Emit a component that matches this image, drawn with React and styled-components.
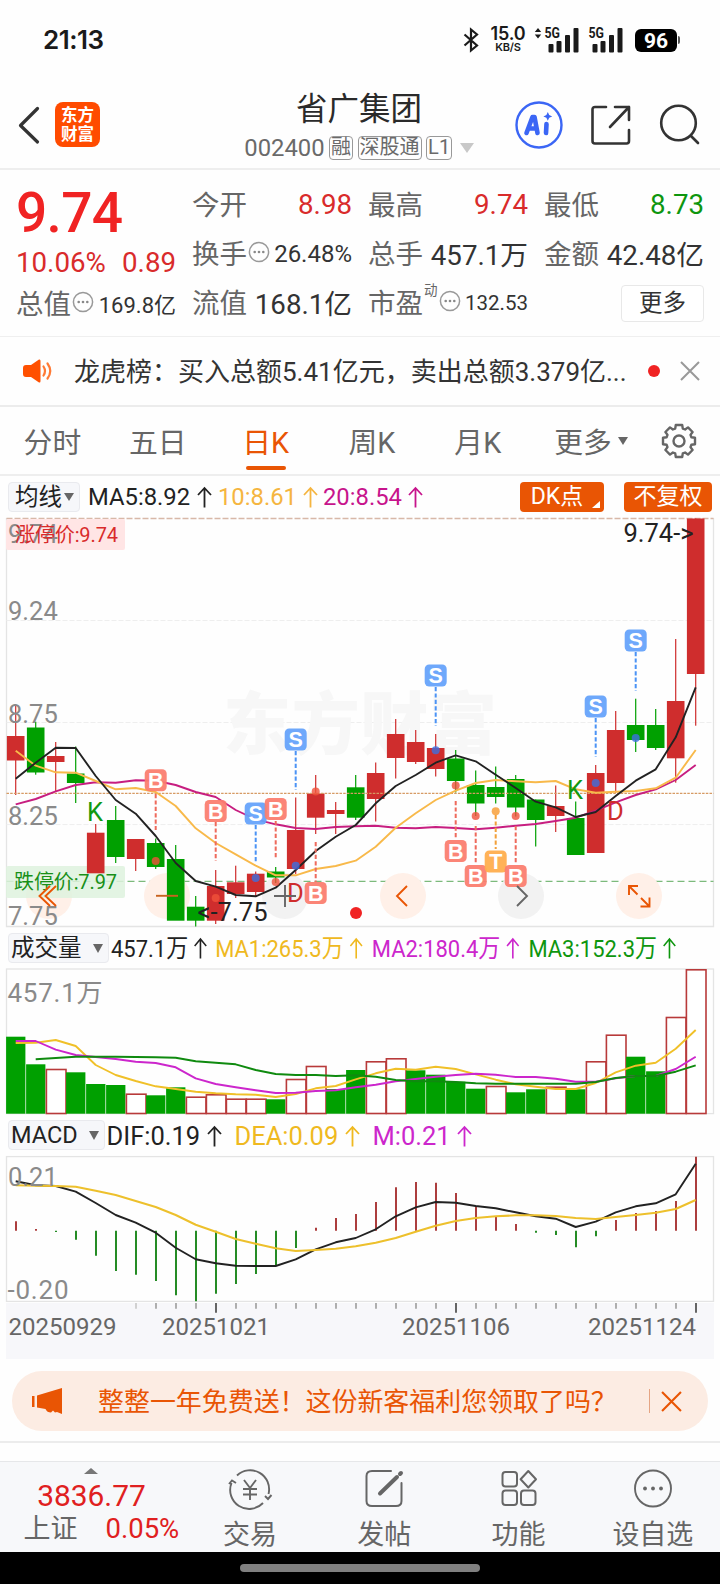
import React from "react";
import styled, { createGlobalStyle } from "styled-components";

const RED = "#d92b2b";
const UP = "#cf2d2d";
const DOWN = "#00a000";
const ORANGE = "#e95504";

const Global = createGlobalStyle`
  body { margin: 0; background: #fff; }
  * { box-sizing: border-box; }
`;

const Screen = styled.div`
  width: 720px;
  height: 1584px;
  overflow: hidden;
  display: flex;
  flex-direction: column;
  background: #fefefe;
  color: #333;
  font-family: Roboto, "Noto Sans CJK SC", sans-serif;
  font-weight: 400;
  svg { display: block; flex: none; overflow: visible; }
`;

/* ---------- status bar ---------- */
const StatusBar = styled.div`
  height: 80px;
  padding: 0 40px 0 43px;
  display: flex;
  align-items: center;
  justify-content: space-between;
  color: #1a1a1a;
`;
const Clock = styled.div`
  font: 600 26px/32px Inter, sans-serif;
  letter-spacing: -0.5px;
`;
const StatusIcons = styled.div`
  display: flex;
  align-items: center;
`;
const Speed = styled.div`
  width: 38px;
  margin: 0 7px 0 10px;
  display: flex;
  flex-direction: column;
  align-items: center;
  font: 600 18px/14px Inter, sans-serif;
  letter-spacing: -0.2px;
  small { margin-top: 1px; font-size: 11px; line-height: 11px; }
`;
const Battery = styled.div`
  width: 42px;
  height: 23px;
  margin: 0 1px 0 11px;
  border-radius: 6px;
  background: #000;
  color: #fff;
  text-align: center;
  font: 700 21px/24px Roboto, sans-serif;
`;
const BatteryTip = styled.div`
  width: 2px;
  height: 8px;
  background: #555;
  border-radius: 0 2px 2px 0;
`;

/* ---------- header ---------- */
const Header = styled.header`
  height: 90px;
  border-bottom: 2px solid #eee;
  display: flex;
  align-items: center;
  padding: 1px 20px 0 18px;
  justify-content: space-between;
`;
const HeaderSide = styled.div`
  width: 190px;
  display: flex;
  align-items: center;
  gap: ${(p) => p.$gap}px;
  justify-content: ${(p) => (p.$end ? "flex-end" : "flex-start")};
`;
const Logo = styled.div`
  width: 45px;
  height: 45px;
  border-radius: 8px;
  background: #ff4b00;
  color: #fff;
  font: 700 16.5px/19px "Noto Sans CJK SC", sans-serif;
  text-align: center;
  padding-top: 3px;
`;
const TitleBlock = styled.div`
  display: flex;
  flex-direction: column;
  align-items: center;
  padding-top: 6px;
`;
const Title = styled.div`
  font-size: 31.5px;
  line-height: 41px;
  color: #2a2a2a;
`;
const Code = styled.div`
  display: flex;
  align-items: center;
  height: 36px;
  gap: 4.5px;
  font-size: 23.8px;
  color: #6a6a6a;
`;
const Tag = styled.span`
  height: 24px;
  padding: 0 1px;
  border: 1px solid #999;
  border-radius: 4px;
  font-size: 20px;
  line-height: 21px;
`;
const Caret = styled.i`
  width: 0;
  height: 0;
  margin-left: ${(p) => p.$ml || 0}px;
  border: ${(p) => p.$w / 2}px solid transparent;
  border-bottom-width: 0;
  border-top: ${(p) => p.$h}px solid ${(p) => p.$c || "#666"};
`;

/* ---------- quote ---------- */
const Quote = styled.section`
  height: 167px;
  border-bottom: 1px solid #efefef;
  padding: 8px 16px 0;
  display: grid;
  grid-template-columns: repeat(4, 160px);
  column-gap: 16px;
`;
const QuoteColumn = styled.div`
  display: flex;
  flex-direction: column;
  padding-top: 2px;
`;
const Price = styled.div`
  font-size: 55px;
  letter-spacing: -0.7px;
  font-weight: 500;
  line-height: 66px;
  color: #f02323;
`;
const Change = styled.div`
  height: 33px;
  display: flex;
  align-items: center;
  justify-content: space-between;
  font-size: 27.7px;
  color: ${RED};
`;
const Cell = styled.div`
  height: 49px;
  display: flex;
  align-items: center;
  white-space: nowrap;
`;
const Label = styled.span`
  font-size: 27.5px;
  margin-bottom: 4px;
  color: #666;
`;
const Value = styled.span`
  margin-left: auto;
  margin-bottom: ${(p) => (p.$unit ? 2 : 0)}px;
  font-size: ${(p) => p.$size || 27.7}px;
  color: ${(p) => p.$c || "#333"};
`;
const Sup = styled.sup`
  font-size: 13.5px;
  line-height: 14px;
  align-self: flex-start;
  margin: 5px 0 0 1px;
  color: #666;
  vertical-align: baseline;
`;
const MoreButton = styled.button`
  margin: 1px 0 0 auto;
  width: 83px;
  height: 37px;
  padding: 0;
  border: 1px solid #e8e8e8;
  border-radius: 4px;
  background: #fff;
  color: #333;
  font: 400 23.5px/35px Roboto, "Noto Sans CJK SC", sans-serif;
`;

/* ---------- notice ---------- */
const Notice = styled.section`
  height: 70px;
  border-bottom: 2px solid #ececec;
  display: flex;
  align-items: center;
  padding: 0 19px 0 22px;
`;
const NoticeText = styled.div`
  width: 561px;
  margin: 0 0 4px 21px;
  font-size: 26px;
  white-space: nowrap;
`;
const RedDot = styled.i`
  width: 12px;
  height: 12px;
  border-radius: 50%;
  background: #f02323;
  margin: 0 20px 0 13px;
`;

/* ---------- tabs ---------- */
const Tabs = styled.nav`
  height: 69px;
  border-bottom: 2px solid #eee;
  display: flex;
  align-items: center;
  padding: 0 23px 0 0;
`;
const Tab = styled.div`
  width: ${(p) => p.$w}px;
  height: 67px;
  display: flex;
  justify-content: center;
  align-items: center;
  position: relative;
  font-size: 28.8px;
  color: ${(p) => (p.$on ? ORANGE : "#666")};
  &::after {
    content: "";
    display: ${(p) => (p.$on ? "block" : "none")};
    position: absolute;
    bottom: 4px;
    width: 40px;
    height: 4px;
    border-radius: 2px;
    background: ${ORANGE};
  }
`;

/* ---------- indicator rows ---------- */
const IndicatorRow = styled.div`
  height: ${(p) => p.$h}px;
  padding: ${(p) => p.$pt}px 8px 0 8px;
  display: flex;
  align-items: flex-start;
`;
const Picker = styled.button`
  width: ${(p) => p.$w}px;
  height: 30px;
  flex: none;
  padding: 0 5px 0 ${(p) => p.$pl}px;
  border: 1px solid #e9eaee;
  border-radius: 4px;
  background: #f6f7fa;
  display: flex;
  align-items: center;
  justify-content: space-between;
  color: #222;
  font: 400 23.5px/28px Roboto, "Noto Sans CJK SC", sans-serif;
`;
const Readouts = styled.div`
  display: flex;
  height: 30px;
  align-items: center;
  margin: ${(p) => p.$mt || 0}px 0 0 ${(p) => p.$ml}px;
  font-size: ${(p) => p.$size}px;
  white-space: nowrap;
  transform: scaleX(${(p) => p.$sx || 1});
  transform-origin: left;
`;
const Readout = styled.span`
  display: flex;
  align-items: center;
  width: ${(p) => p.$w}px;
  color: ${(p) => p.$c};
  svg { margin-left: 6.5px; margin-top: ${(p) => p.$at || 0}px; }
`;
const Chip = styled.button`
  width: ${(p) => p.$w}px;
  height: 30px;
  margin: 0 0 0 ${(p) => p.$ml}px;
  padding: 0 ${(p) => p.$pr || 0}px 0 0;
  border: 0;
  border-radius: 4px;
  background: ${ORANGE};
  color: #fff;
  position: relative;
  font: 400 23px/30px Roboto, "Noto Sans CJK SC", sans-serif;
  white-space: nowrap;
`;
const Corner = styled.i`
  position: absolute;
  right: 4px;
  bottom: 4px;
  border-left: 8px solid transparent;
  border-bottom: 7px solid #fff;
`;
const AxisBand = styled.div`
  height: 57px;
`;

/* ---------- banner ---------- */
const BannerArea = styled.div`
  height: 101px;
  padding: 11px 12px 0;
`;
const Banner = styled.div`
  height: 60px;
  border-radius: 30px;
  background: #fcece3;
  color: ${ORANGE};
  display: flex;
  align-items: center;
  padding: 0 26px 0 19px;
`;
const BannerText = styled.div`
  width: 552px;
  margin: 0 0 4px 35px;
  font-size: 25.95px;
  white-space: nowrap;
`;
const Separator = styled.i`
  width: 1px;
  height: 24px;
  background: #e5a584;
  margin-right: 11px;
`;
const Divider = styled.div`
  height: 2px;
  margin: 10px -12px 0;
  background: #ececec;
`;

/* ---------- bottom nav ---------- */
const BottomNav = styled.nav`
  height: 91px;
  border-top: 1px solid #e6e7e9;
  background: #f7f8fa;
  display: flex;
`;
const IndexBox = styled.div`
  width: 183px;
  display: flex;
  flex-direction: column;
  align-items: center;
  padding-top: 6px;
  svg { margin-bottom: 5px; }
`;
const IndexValue = styled.div`
  font-size: 29.9px;
  line-height: 34px;
  color: #e02020;
`;
const IndexRow = styled.div`
  display: flex;
  align-items: center;
  align-self: flex-start;
  gap: 28px;
  margin-left: 23.5px;
  height: 31px;
  font-size: 27px;
  line-height: 32px;
  color: #666;
  white-space: nowrap;
  b { font-weight: 400; font-size: 27.5px; color: #e02020; }
`;
const NavItem = styled.div`
  width: 134.3px;
  display: flex;
  flex-direction: column;
  align-items: center;
  padding-top: 4px;
  font-size: 27px;
  line-height: 34px;
  color: #666;
  white-space: nowrap;
  svg { margin-bottom: 6px; }
`;
const GestureArea = styled.div`
  height: 32px;
  background: #000;
  display: flex;
  align-items: center;
  justify-content: center;
  padding-bottom: 3px;
`;
const GesturePill = styled.div`
  width: 240px;
  height: 8px;
  margin-top: 2px;
  border-radius: 4px;
  background: #808080;
`;

/* ---------- icons ---------- */
const Signal = ({ arrows }) => (
  <svg width={arrows ? 54 : 36} height="26" viewBox={arrows ? "0 0 54 26" : "10 0 36 26"}>
    {arrows && <path d="M4 1l3.2 4H.8zM4 11.5L.8 7.5h6.4z" fill="#1a1a1a" />}
    <text x="10.5" y="11" fontSize="14" fontWeight="700" fontFamily="Roboto" textLength="15.5" lengthAdjust="spacingAndGlyphs" fill="#1a1a1a">5G</text>
    {[[14.5, 17], [22.5, 14], [31, 8], [39.5, 1]].map(([x, y]) => (
      <rect key={x} x={x} y={y} width="5" height={25.5 - y} rx="1" fill="#1a1a1a" />
    ))}
  </svg>
);

const Arrow = () => (
  <svg width="15" height="22" viewBox="0 0 15 22" fill="none" stroke="currentColor" strokeWidth="1.8">
    <path d="M7.5 21.5V2M1 9l6.5-7L14 9" />
  </svg>
);

const InfoIcon = styled.svg`
  width: 22px;
  height: 22px;
  margin: 0 0 3px 1px;
`;
const InfoDot = () => (
  <InfoIcon viewBox="0 0 22 22">
    <circle cx="11" cy="11" r="9.6" fill="none" stroke="#999" strokeWidth="1.5" />
    {[6.7, 11, 15.3].map((x) => <circle key={x} cx={x} cy="11" r="1.3" fill="#888" />)}
  </InfoIcon>
);

const Cross = ({ size, width, color }) => (
  <svg width={size} height={size} viewBox="0 0 20 20" stroke={color} strokeWidth={width}>
    <path d="M1 1l18 18M19 1L1 19" />
  </svg>
);

const gearPath = (() => {
  const pts = [];
  for (let i = 0; i < 8; i++) {
    const a = (i * Math.PI) / 4 - Math.PI / 2;
    [[-0.2, 16.3], [0.2, 16.3], [0.3, 13], [Math.PI / 4 - 0.3, 13]].forEach(([d, r]) =>
      pts.push(`${(18 + r * Math.cos(a + d)).toFixed(1)} ${(18 + r * Math.sin(a + d)).toFixed(1)}`)
    );
  }
  return `M${pts.join("L")}Z`;
})();
const GearIcon = styled.svg`
  width: 36px;
  height: 36px;
  margin-left: 11px;
`;

/* ---------- chart data ---------- */
const cx = (i) => 15.7 + 20 * i;

// [direction, body top, body bottom, wick top, wick bottom]
const candles = [
  [1, 736, 760.5, 705, 795], [0, 727.5, 772.5, 721.7, 774.7], [1, 756, 762, 742, 791], [0, 773.5, 783, 746.5, 803],
  [1, 832.7, 873.3, 824, 873], [0, 820, 857, 806, 863], [1, 839, 859, 839, 871], [0, 843, 867, 838.5, 869],
  [0, 859, 920.7, 845, 920], [0, 906.7, 920.7, 896, 926.5], [1, 886, 920.7, 870, 924], [1, 882.3, 894, 865.7, 898],
  [1, 873.7, 892, 871.5, 896], [0, 871.5, 877.5, 867, 883], [1, 830, 869, 797.5, 874], [1, 793.5, 817.7, 775, 834],
  [1, 810, 814, 802, 834], [0, 787.3, 817.7, 775, 820], [1, 773, 799, 762.5, 821.5], [1, 734, 758, 719, 778.5],
  [1, 742, 762, 730, 764], [1, 748, 769, 734, 776.5], [0, 758.5, 781, 750, 792.5], [0, 785, 803.5, 770.5, 816],
  [0, 787, 797, 766.5, 803.5], [0, 779, 807.5, 775, 816.5], [0, 799.5, 820, 799.5, 846.5], [1, 806, 816, 785.5, 832],
  [0, 818, 855, 801.5, 855], [1, 773, 853, 765, 853], [1, 730, 783, 711, 793], [0, 725, 740, 698.7, 752],
  [0, 725, 748, 709, 750], [1, 701, 758.3, 639, 782.7], [1, 518.5, 674, 518.5, 725.7],
];
const ma5 = [778.7, 762.7, 747.7, 748, 776, 800, 813.7, 836, 863, 881, 886.7, 895, 896.3, 887.7, 870, 851, 836.7, 825, 803.3, 786, 775, 762.7, 755.3, 761.3, 774.7, 788, 801.7, 807.3, 817, 812, 796, 780.7, 769.3, 737.3, 687.3];
const ma10 = [750.7, 765.7, 772.3, 772.7, 781, 789.3, 788, 792, 806, 828.3, 843, 854.3, 865.7, 875.3, 875.3, 869, 866, 860.7, 846.7, 827.7, 813.3, 800, 790.7, 783, 780, 781.3, 782.3, 781, 789.3, 792.7, 791.7, 791, 788.3, 777.7, 750];
const ma20 = [804.3, 799, 791.3, 785, 782.3, 782.7, 780.3, 780.7, 785, 792, 797, 810, 819.3, 824.3, 828, 829, 827, 826.3, 825.7, 827.7, 828.3, 827, 828, 829.3, 827.7, 825.7, 824, 821, 817.7, 810.7, 802.3, 795, 789.3, 780, 765];

const volumes = [1036.7, 1064.3, 1069, 1072.3, 1084, 1085, 1093.7, 1095.3, 1087.3, 1096.7, 1094.3, 1098.7, 1098.7, 1099.3, 1079, 1066, 1089, 1070, 1061.3, 1058.3, 1070.3, 1074.7, 1081.7, 1088.7, 1086, 1092.3, 1089.3, 1086.7, 1089.3, 1061.3, 1034.7, 1056.7, 1071.3, 1017, 969.3];
// r: hollow red bar, g: solid green bar
const volumeKinds = "ggrgggrggrrrrgrrggrrggggrggrgrrggrr";
const volMa1 = [1043, 1042.7, 1040, 1046, 1065, 1075, 1081, 1086.3, 1089, 1091.7, 1093.3, 1094.3, 1094.7, 1097, 1094, 1088.3, 1086, 1079.3, 1073.3, 1068.7, 1069.7, 1066.7, 1069, 1074.3, 1079.7, 1084.3, 1086.7, 1089, 1089, 1083, 1072.3, 1065.7, 1062.7, 1048.7, 1030];
const volMa2 = [1041, 1041, 1049.7, 1055, 1057, 1059, 1061.7, 1063, 1067.3, 1078.3, 1084, 1087.3, 1090.3, 1093, 1092.7, 1091, 1090.3, 1087.3, 1084.7, 1081.3, 1079, 1076.7, 1075, 1073.7, 1074.7, 1077, 1077, 1078.7, 1081.7, 1081.7, 1078.3, 1076, 1076, 1069, 1056.7];
const volMa3 = [1060, 1059.3, 1058, 1056.7, 1056.7, 1056.7, 1057, 1057.3, 1057.7, 1061.3, 1062.7, 1064.3, 1070, 1074, 1075, 1075, 1076, 1075.3, 1076.7, 1080, 1081.3, 1081.3, 1082, 1083.3, 1083.7, 1083.7, 1083.7, 1083.7, 1083.7, 1082, 1078, 1076, 1076, 1071.7, 1065.3];

const macd = [1221.3, 1229, 1231.9, 1239.7, 1255.7, 1271, 1274.7, 1281, 1295.3, 1301.3, 1293.7, 1284, 1274, 1265.7, 1248, 1227.7, 1218, 1214, 1202, 1187.3, 1182, 1182.7, 1193, 1206.3, 1216.7, 1224, 1232.7, 1235, 1247.3, 1236.3, 1220, 1213, 1211, 1201, 1156.7];
const dif = [1181.3, 1185.3, 1186, 1191.7, 1203, 1215, 1222.7, 1232.7, 1247.7, 1259.3, 1263.3, 1265.7, 1266, 1266, 1259.3, 1249.3, 1242.3, 1238, 1229.3, 1216.3, 1207.3, 1202, 1202.7, 1206, 1208.3, 1212.3, 1216.3, 1218.7, 1227, 1221.7, 1212.3, 1206.3, 1203.3, 1194.3, 1163.7];
const dea = [1185.3, 1185.7, 1186, 1186.7, 1190.7, 1195, 1201, 1207, 1215, 1224.7, 1231.7, 1239, 1243.7, 1248.3, 1251, 1250, 1248.7, 1246.3, 1242.7, 1238, 1231.7, 1225.7, 1221, 1218, 1216.3, 1215.3, 1215.3, 1216, 1218, 1219, 1217, 1215, 1212.7, 1209, 1200];

const markerColor = { B: "#fb7d6e", S: "#65a3fb", T: "#ffad4d" };
const lineColor = { B: "#ee6a5c", S: "#4b93f5", T: "#f2a03a" };
const dotColor = { B: "#f0513a", S: "#3c6fe0", T: "#f79a2e" };
// [letter, candle, badge centre, line start, line end, dot]
const markers = [
  ["B", 7, 780.3, 794, 830, 861], ["B", 10, 811, 822, 861, 898], ["S", 12, 813.5, 825, 863, 878],
  ["B", 13, 809, 821, 859, 882], ["S", 14, 739.5, 751, 790, 865.7], ["B", 15, 893, 842, 882, 791.5],
  ["S", 21, 675.5, 687, 726, 750.3], ["B", 22, 851, 801, 839, 785.5], ["B", 23, 876, 826, 864, 816],
  ["T", 24, 861.5, 815, 849, 811.3], ["B", 25, 876, 826, 864, 816], ["S", 29, 706.5, 718, 757, 783],
  ["S", 31, 640.5, 652, 691, 738],
];

const ChartText = styled.text`
  font-family: Roboto, "Noto Sans CJK SC", sans-serif;
  font-size: ${(p) => p.$size || 25.5}px;
  font-weight: ${(p) => p.$weight || 400};
`;
const BadgeText = styled.text`
  font: 700 21.5px "Liberation Sans", sans-serif;
  text-anchor: middle;
  fill: #fff;
`;

const Line = ({ data, color, width = 1.9, from = 0 }) => (
  <polyline
    fill="none" stroke={color} strokeWidth={width} strokeLinejoin="round"
    points={data.slice(from).map((y, i) => `${cx(i + from)},${y}`).join(" ")}
  />
);

const KLineChart = () => (
  <svg width="720" height="414" viewBox="0 517 720 414">
    <path d="M6.5 518V926.5H713.5V518" fill="none" stroke="#e4e4e4" strokeWidth="1.3" />
    <path d="M6.5 620.5H713M6.5 722.5H713M6.5 824.6H713" stroke="#eeeeee" strokeDasharray="5 2" />
    <ChartText x="223" y="749" textLength="274" $size={68} $weight={900} fill="#f7f7f7">东方财富</ChartText>
    <path d="M6.5 518.5H713.5" stroke="#d8b8a8" strokeWidth="1.3" strokeDasharray="6 2" />
    <path d="M6.5 881.4H713.5" stroke="#7cba7c" strokeWidth="1.2" strokeDasharray="7 4" />
    {[[49, 1], [167, 1], [285, 0], [403, 1], [521, 0], [639, 1]].map(([x, warm]) => (
      <circle key={x} cx={x} cy="896" r="23" fill={warm ? "#fff0e8" : "#f2f2f2"} />
    ))}
    <rect x="6" y="519" width="119" height="31" rx="2" fill="#ffe5e5" />
    <rect x="6" y="866" width="119" height="32" rx="2" fill="#def2de" fillOpacity="0.85" />
    {candles.map(([up, t, b, wt, wb], i) => (
      <g key={i} fill={up ? UP : DOWN}>
        <rect x={cx(i) - 0.6} y={wt} width="1.2" height={wb - wt} />
        <rect x={cx(i) - 8.8} y={t} width="17.6" height={b - t} />
      </g>
    ))}
    {[[620, "9.24"], [722.5, "8.75"], [824.5, "8.25"], [924.5, "7.75"], [542.5, "9.74"]].map(([y, t]) => (
      <ChartText key={t} x="8" y={y} fill="#8a8a8a">{t}</ChartText>
    ))}
    <path d="M6.5 793.4H713.5" stroke="#d69a63" strokeWidth="1.2" strokeDasharray="2.5 1.2" />
    <Line data={ma20} color="#c71e80" />
    <Line data={ma10} color="#f8b94a" />
    <Line data={ma5} color="#222" />
    <ChartText x="15" y="541.5" $size={20} textLength="103" fill={RED}>涨停价:9.74</ChartText>
    <ChartText x="14" y="888.5" $size={20} textLength="103" fill="#189018">跌停价:7.97</ChartText>
    {markers.map(([k, i, y, l1, l2, d]) => (
      <g key={i}>
        <path d={`M${cx(i)} ${l1}V${l2}`} stroke={lineColor[k]} strokeWidth="2" strokeDasharray="4.2 2.2" />
        <circle cx={cx(i)} cy={d} r="4" fill={dotColor[k]} fillOpacity="0.8" />
        <rect x={cx(i) - 11} y={y - 11} width="22" height="22" rx="4.5" fill={markerColor[k]} fillOpacity="0.94" />
        <BadgeText x={cx(i)} y={y + 7.5}>{k}</BadgeText>
      </g>
    ))}
    <ChartText x="87" y="821" $size={25.5} fill="#119911">K</ChartText>
    <ChartText x="567" y="799" $size={25.5} fill="#119911">K</ChartText>
    <ChartText x="287" y="902" $size={25.5} fill={UP}>D</ChartText>
    <ChartText x="607" y="820" $size={25.5} fill={UP}>D</ChartText>
    <ChartText x="623.5" y="541.7" textLength="70" fill="#222">{"9.74->"}</ChartText>
    <ChartText x="197.5" y="920.7" textLength="70" fill="#222">{"<-7.75"}</ChartText>
    <circle cx="356" cy="913" r="6" fill="#f02323" />
    <g fill="none" stroke={ORANGE} strokeWidth="1.9">
      <path d="M50 886L39.5 896L50 906M56 886L45.5 896L56 906" />
      <path d="M156 895.8H178" stroke="#c8631f" />
      <path d="M407 886L397 896L407 906" />
      <path d="M637.5 894.5L629 886M638 886H629V895M641 898L649.5 906.5M640.5 906.5H649.5V897.5" />
      <path d="M274 896H296M285 885V907M517 886L527 896L517 906" stroke="#666" />
    </g>
  </svg>
);

const VolumeChart = () => (
  <svg width="720" height="149" viewBox="0 967 720 149">
    <rect x="6.5" y="969" width="707" height="144.6" fill="none" stroke="#e4e4e4" strokeWidth="1.3" />
    <ChartText x="7.5" y="1001.7" $size={26} textLength="95" fill="#8a8a8a">457.1万</ChartText>
    {volumes.map((y, i) =>
      volumeKinds[i] === "r" ? (
        <rect key={i} x={cx(i) - 9.3} y={y + 0.5} width="19.6" height={1113 - y} fill="#fff" stroke="#b83a3a" strokeWidth="1.6" />
      ) : (
        <rect key={i} x={cx(i) - 9.6} y={y} width="19.3" height={1113.7 - y} fill={DOWN} />
      )
    )}
    <Line data={volMa1} color="#f0c028" />
    <Line data={volMa2} color="#cc26cc" />
    <Line data={volMa3} color="#0f8a0f" from={1} />
  </svg>
);

const MacdChart = () => (
  <svg width="720" height="148" viewBox="0 1155 720 148">
    <rect x="6.5" y="1156.6" width="707" height="144.8" fill="none" stroke="#e4e4e4" strokeWidth="1.3" />
    {macd.map((y, i) => (
      <path key={i} d={`M${cx(i) + 0.3} 1230.7V${y}`} stroke={y < 1230.7 ? "#a83434" : "#1a861a"} strokeWidth="1.9" />
    ))}
    <Line data={dif} color="#222" />
    <Line data={dea} color="#edc02c" width={2.1} />
    <ChartText x="8" y="1186.3" fill="#8a8a8a">0.21</ChartText>
    <ChartText x="7.5" y="1299.3" $size={26} textLength="61" fill="#8a8a8a">-0.20</ChartText>
  </svg>
);

const TimeAxis = () => (
  <svg width="720" height="57" viewBox="0 1303 720 57">
    <rect x="6" y="1303" width="708" height="56" fill="#f7f7fa" />
    {Array.from({ length: 29 }, (_, k) => k + 6).map((i) => {
      const major = (i - 10) % 12 === 0;
      return <path key={i} d={`M${cx(i) + 0.3} 1303V${major ? 1312.7 : 1308.7}`} stroke={major ? "#555" : i < 7 ? "#ccc" : "#a6a6a6"} strokeWidth="1.8" />;
    })}
    {[[8.5, "20250929"], [162, "20251021"], [402, "20251106"], [588, "20251124"]].map(([x, t]) => (
      <ChartText key={t} x={x} y="1335.3" $size={24} fill="#666">{t}</ChartText>
    ))}
  </svg>
);

const Stat = ({ label, value, color, size, info, sup }) => (
  <Cell>
    <Label>{label}</Label>
    {sup && <Sup>{sup}</Sup>}
    {info && <InfoDot />}
    <Value $c={color} $size={size} $unit={/[万亿]/.test(value)}>{value}</Value>
  </Cell>
);

export default function App() {
  return (
    <Screen>
      <Global />
      <StatusBar>
        <Clock>21:13</Clock>
        <StatusIcons>
          <svg width="16" height="26" viewBox="0 0 16 26" fill="none" stroke="#1a1a1a" strokeWidth="2.2">
            <path d="M1.5 7.5L14 18.5L8 23.5V2.5L14 7.5L1.5 18.5" />
          </svg>
          <Speed>15.0<small>KB/S</small></Speed>
          <Signal arrows />
          <Signal />
          <Battery>96</Battery>
          <BatteryTip />
        </StatusIcons>
      </StatusBar>

      <Header>
        <HeaderSide $gap={15}>
          <svg width="22" height="38" viewBox="0 0 22 38" fill="none" stroke="#333" strokeWidth="3.2" strokeLinecap="round" strokeLinejoin="round">
            <path d="M19.5 2.5L2.5 19.5L19.5 36" />
          </svg>
          <Logo>东方<br />财富</Logo>
        </HeaderSide>
        <TitleBlock>
          <Title>省广集团</Title>
          <Code>
            002400<Tag>融</Tag><Tag>深股通</Tag><Tag>L1</Tag>
            <Caret $w={15} $h={10} $ml={3} $c="#c8c8c8" />
          </Code>
        </TitleBlock>
        <HeaderSide $gap={28} $end>
          <svg width="48" height="48" viewBox="0 0 48 48">
            <circle cx="24" cy="24" r="22.5" fill="none" stroke="#3b66f5" strokeWidth="2.4" />
            <g fill="none" stroke="#3b66f5" strokeWidth="4.6" strokeLinejoin="round" strokeLinecap="round">
              <path d="M11.5 32L17.5 16H19.5L22.5 32M14.5 27.5H21" />
              <path d="M31.5 23L31 32" />
            </g>
            <path d="M32.8 11l1.4 3 3 1.4-3 1.4-1.4 3-1.4-3-3-1.4 3-1.4z" fill="#3b66f5" />
          </svg>
          <svg width="40" height="40" viewBox="0 0 40 40" fill="none" stroke="#333" strokeWidth="2.6" strokeLinecap="round" strokeLinejoin="round">
            <path d="M15 2H4Q1.5 2 1.5 4.5V36Q1.5 38.5 4 38.5H35.5Q38 38.5 38 36V25M24 2H38V15M38 2L19 22" />
          </svg>
          <svg width="41" height="41" viewBox="0 0 41 41" fill="none" stroke="#333" strokeWidth="2.6" strokeLinecap="round">
            <circle cx="19.5" cy="19" r="17.3" />
            <path d="M32 32L39 39" />
          </svg>
        </HeaderSide>
      </Header>

      <Quote>
        <QuoteColumn>
          <Price>9.74</Price>
          <Change><span>10.06%</span><span>0.89</span></Change>
          <Stat label="总值" value="169.8亿" size={22} info />
        </QuoteColumn>
        <QuoteColumn>
          <Stat label="今开" value="8.98" color={RED} />
          <Stat label="换手" value="26.48%" size={24} info />
          <Stat label="流值" value="168.1亿" />
        </QuoteColumn>
        <QuoteColumn>
          <Stat label="最高" value="9.74" color={RED} />
          <Stat label="总手" value="457.1万" />
          <Stat label="市盈" value="132.53" size={20.5} sup="动" info />
        </QuoteColumn>
        <QuoteColumn>
          <Stat label="最低" value="8.73" color="#0e960e" />
          <Stat label="金额" value="42.48亿" />
          <Cell><MoreButton>更多</MoreButton></Cell>
        </QuoteColumn>
      </Quote>

      <Notice>
        <svg width="31" height="24" viewBox="0 0 31 24">
          <path d="M4 6H9L17 0.5Q18.5 0 18.5 2V22Q18.5 24 17 23.5L9 18H4Q1 18 1 15V9Q1 6 4 6Z" fill="#ff5000" />
          <path d="M21.5 7.5Q24.5 12 21.5 16.5M25.5 4.5Q31 12 25.5 19.5" fill="none" stroke="#ff7a35" strokeWidth="2.2" strokeLinecap="round" />
        </svg>
        <NoticeText>龙虎榜：买入总额5.41亿元，卖出总额3.379亿...</NoticeText>
        <RedDot />
        <Cross size={20} width={2} color="#999" />
      </Notice>

      <Tabs>
        <Tab $w={105}>分时</Tab>
        <Tab $w={106}>五日</Tab>
        <Tab $w={110} $on>日K</Tab>
        <Tab $w={103}>周K</Tab>
        <Tab $w={109}>月K</Tab>
        <Tab $w={118}>更多<Caret $w={10} $h={8} $ml={6} /></Tab>
        <GearIcon viewBox="0 0 36 36" fill="none" stroke="#666" strokeWidth="2.4" strokeLinejoin="round">
          <path d={gearPath} />
          <circle cx="18" cy="18" r="5.5" />
        </GearIcon>
      </Tabs>

      <IndicatorRow $h={41} $pt={6}>
        <Picker $w={72} $pl={6}>均线<Caret $w={10} $h={8} /></Picker>
        <Readouts $ml={8} $size={23.8}>
          <Readout $w={130} $c="#222">MA5:8.92<Arrow /></Readout>
          <Readout $w={105} $c="#f5b540">10:8.61<Arrow /></Readout>
          <Readout $w={101} $c="#c7148c">20:8.54<Arrow /></Readout>
        </Readouts>
        <Chip $w={84} $ml={96} $pr={10}>DK点<Corner /></Chip>
        <Chip $w={88} $ml={20}>不复权</Chip>
      </IndicatorRow>
      <KLineChart />

      <IndicatorRow $h={36} $pt={2}>
        <Picker $w={101} $pl={2}>成交量<Caret $w={10} $h={9} /></Picker>
        <Readouts $ml={2} $mt={-2} $size={24.7} $sx={0.89}>
          <Readout $w={117} $c="#222" $at={3}>457.1万<Arrow /></Readout>
          <Readout $w={176} $c="#efb91f" $at={3}>MA1:265.3万<Arrow /></Readout>
          <Readout $w={176} $c="#cc26cc" $at={3}>MA2:180.4万<Arrow /></Readout>
          <Readout $w={170} $c="#0e960e" $at={3}>MA3:152.3万<Arrow /></Readout>
        </Readouts>
      </IndicatorRow>
      <VolumeChart />

      <IndicatorRow $h={39} $pt={4}>
        <Picker $w={97} $pl={2}>MACD<Caret $w={10} $h={9} /></Picker>
        <Readouts $ml={1.5} $mt={1} $size={25.5}>
          <Readout $w={128} $c="#222">DIF:0.19<Arrow /></Readout>
          <Readout $w={138} $c="#efb91f">DEA:0.09<Arrow /></Readout>
          <Readout $w={110} $c="#cc26cc">M:0.21<Arrow /></Readout>
        </Readouts>
      </IndicatorRow>
      <MacdChart />
      <AxisBand><TimeAxis /></AxisBand>

      <BannerArea>
        <Banner>
          <svg width="32" height="28" viewBox="0 0 32 28" fill={ORANGE}>
            <path d="M1 9h2.5v11H1zM6 8.5L31 1V27L26 25L24 25.5L22 23.5L20 25.5Q16 25.5 14.5 22L6 20.5Z" />
          </svg>
          <BannerText>整整一年免费送！这份新客福利您领取了吗？</BannerText>
          <Separator />
          <Cross size={21} width={2} color={ORANGE} />
        </Banner>
        <Divider />
      </BannerArea>

      <BottomNav>
        <IndexBox>
          <svg width="14" height="6" viewBox="0 0 14 6"><path d="M0 6L7 0L14 6Z" fill="#777" /></svg>
          <IndexValue>3836.77</IndexValue>
          <IndexRow>上证<b>0.05%</b></IndexRow>
        </IndexBox>
        <NavItem>
          <svg width="46" height="46" viewBox="0 0 46 46" fill="none" stroke="#666" strokeWidth="1.9">
            <path d="M10 9.5A19 19 0 0 1 41.5 28M36 37A19 19 0 0 1 4.5 17M2 18L5 14.5L9 17M38 30L41 33L44.5 29" />
            <path d="M17 14L23 22L29 14M23 22V34M16 23H30M16 28.5H30" />
          </svg>
          交易
        </NavItem>
        <NavItem>
          <svg width="46" height="46" viewBox="0 0 46 46" fill="none" stroke="#666" strokeWidth="2" strokeLinecap="round">
            <path d="M30 5H11Q5.5 5 5.5 10V35Q5.5 40 11 40H35Q40.5 40 40.5 35V17" />
            <path d="M19 27.5L36 11" strokeWidth="4" /><path d="M39 8L40 7" strokeWidth="4" />
          </svg>
          发帖
        </NavItem>
        <NavItem>
          <svg width="46" height="46" viewBox="0 0 46 46" fill="none" stroke="#666" strokeWidth="2" strokeLinejoin="round">
            <rect x="6.5" y="6" width="14.5" height="14.5" rx="3" />
            <rect x="6.5" y="24.5" width="14.5" height="14.5" rx="3" />
            <rect x="25" y="24.5" width="14.5" height="14.5" rx="3" />
            <path d="M32.3 5L40 13.2L32.3 21.5L24.6 13.2Z" />
          </svg>
          功能
        </NavItem>
        <NavItem>
          <svg width="46" height="46" viewBox="0 0 46 46">
            <circle cx="23" cy="22.5" r="18" fill="none" stroke="#666" strokeWidth="1.9" />
            {[15, 23, 31].map((x) => <circle key={x} cx={x} cy="22.5" r="1.9" fill="#666" />)}
          </svg>
          设自选
        </NavItem>
      </BottomNav>
      <GestureArea><GesturePill /></GestureArea>
    </Screen>
  );
}
